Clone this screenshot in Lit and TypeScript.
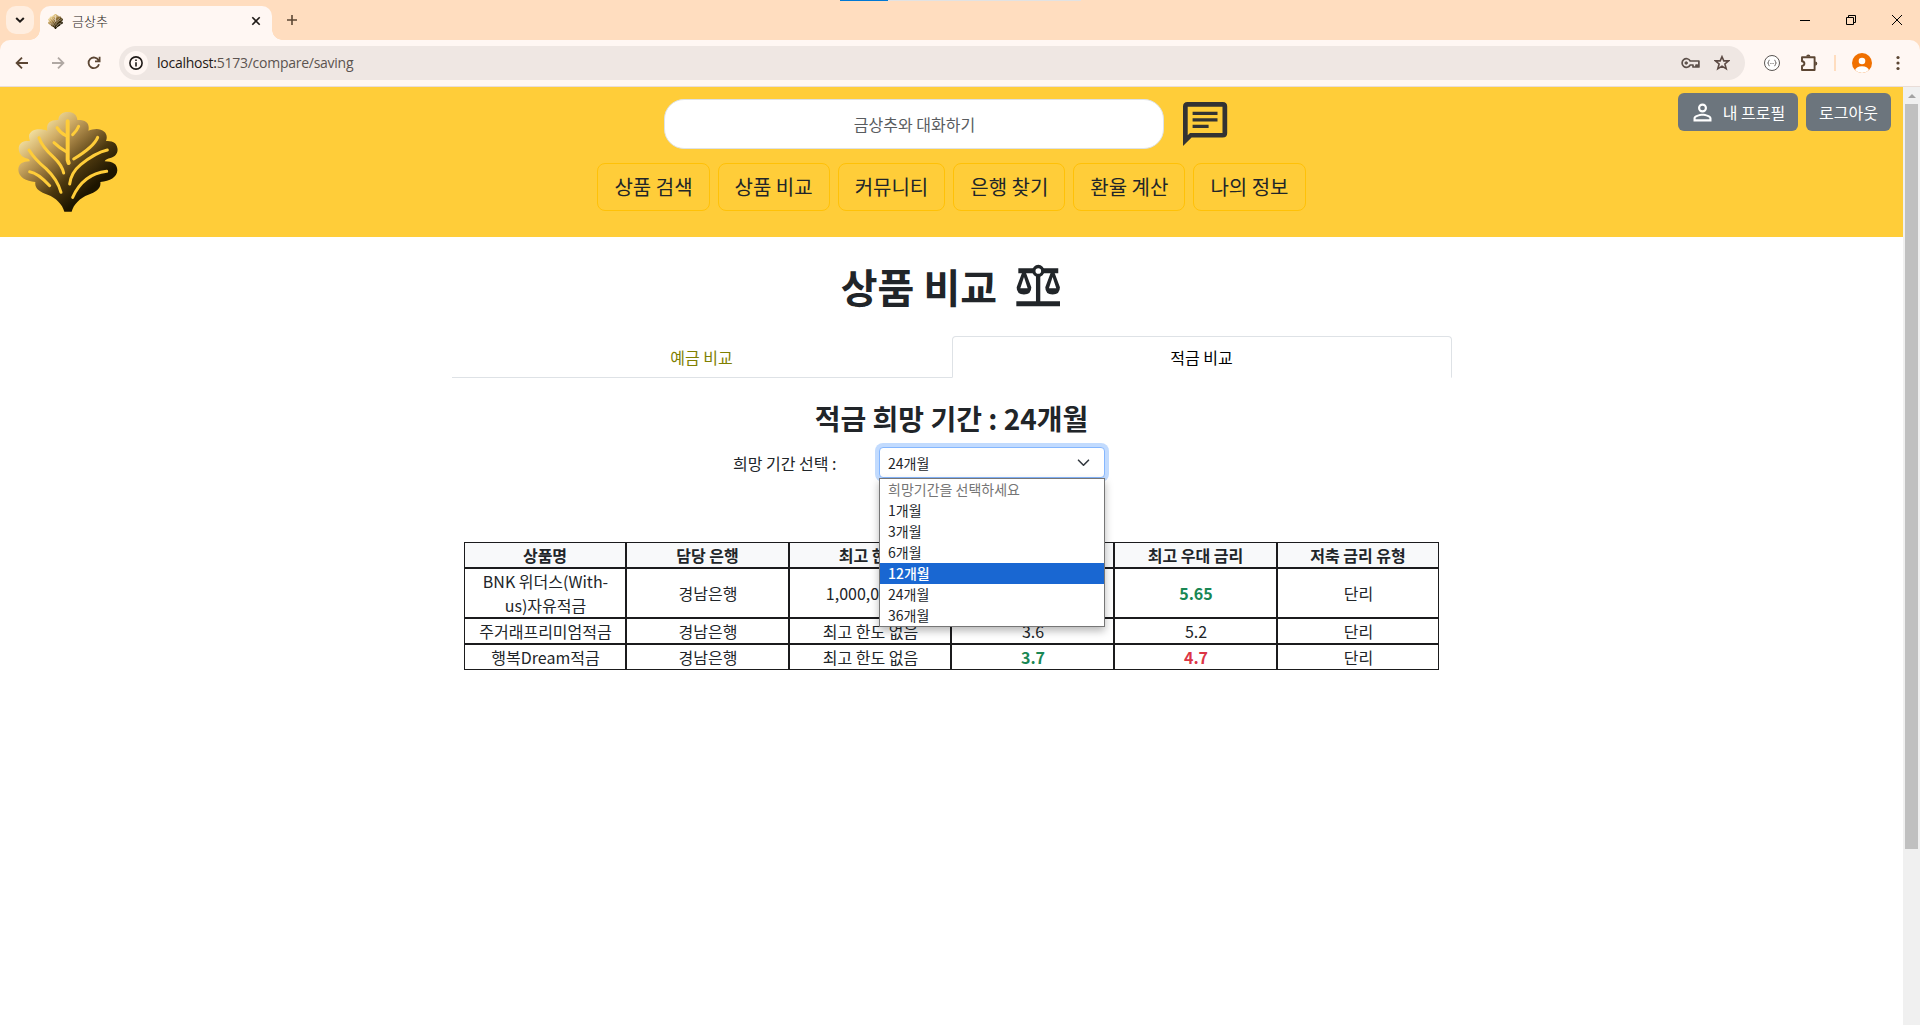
import { LitElement, html, svg, css } from "lit";
import { customElement, property, state } from "lit/decorators.js";
import { classMap } from "lit/directives/class-map.js";

/* ---------- leaf logo ---------- */
@customElement("leaf-logo")
class LeafLogo extends LitElement {
  static styles = css`
    :host { display: block; }
    svg { display: block; width: 100%; height: 100%; }
    .vein { fill: none; stroke: var(--vein, #ffcd39); stroke-width: 9; stroke-linecap: round; stroke-linejoin: round; }
    .vein.main { stroke-width: 12; }
  `;
  render() {
    return html`<svg viewBox="54 36 300 300">
      <defs>
        <linearGradient id="g" gradientUnits="userSpaceOnUse" x1="115" y1="80" x2="275" y2="265">
          <stop offset="0" stop-color="#f0dc9c" />
          <stop offset=".22" stop-color="#d0ad66" />
          <stop offset=".45" stop-color="#96753a" />
          <stop offset=".72" stop-color="#4b370e" />
          <stop offset="1" stop-color="#1d1500" />
        </linearGradient>
      </defs>
      <path fill="url(#g)" d="M193 335C187 312 168 294 143 284C120 276 103 266 106 246C78 244 56 232 55 210C55 192 68 184 89 184C90 178 84 176 76 174C52 166 48 130 74 124C80 122 86 123 90 122C80 100 97 88 118 88C126 88 134 90 142 92C138 70 150 59 175 60C176 44 188 36 203 36C219 36 231 44 232 60C258 59 270 70 265 92C273 90 281 87 290 87C312 88 326 102 318 123C328 122 338 124 345 130C360 148 352 170 331 174C323 176 317 178 314 184C338 184 352 192 352 211C351 232 330 244 301 246C304 266 288 276 265 284C240 294 221 312 215 335Z" />
      <path class="vein main" d="M203 64V180L206 189" />
      <path class="vein" d="M171 83Q181 99 198 107M236 79Q231 92 218 104M162 128Q176 142 200 156M293 112Q282 140 221 177" />
      <path class="vein" d="M117 113Q126 140 162 173Q186 196 191 219M87 150Q104 178 138 206Q172 238 183 277M89 215Q114 219 149 257M322 150Q286 158 242 194Q213 218 209 252M320 214Q250 222 218 292" />
    </svg>`;
  }
}

/* ---------- browser frame ---------- */
@customElement("browser-frame")
class BrowserFrame extends LitElement {
  static styles = css`
    :host { display: block; font-family: "Noto Sans CJK KR", sans-serif; }
    .strip { height: 40px; background: #ffddbf; display: flex; align-items: flex-start; position: relative; }
    .loadbar { position: absolute; left: 840px; top: 0; width: 241px; height: 1px; background: #e2e2e2; }
    .loadbar::before { content: ""; display: block; width: 48px; height: 1px; background: #0078d4; }
    .search-tabs { width: 28px; height: 28px; margin: 6px 0 0 6px; border-radius: 10px; background: #ffeee0; display: grid; place-items: center; }
    .tab { margin: 6px 0 0 6px; width: 232px; height: 34px; box-sizing: border-box; background: #fff7f3; border-radius: 10px 10px 0 0; display: flex; align-items: center; padding: 0 10px 4px 8px; position: relative; }
    .tab::before, .tab::after { content: ""; position: absolute; bottom: 0; width: 10px; height: 10px; }
    .tab::before { left: -10px; background: radial-gradient(circle at 0 0, transparent 9.5px, #fff7f3 10px); }
    .tab::after { right: -10px; background: radial-gradient(circle at 100% 0, transparent 9.5px, #fff7f3 10px); }
    .favicon { width: 15px; height: 15px; --vein: #fff7f3; }
    .tab-title { margin-left: 9px; flex: 1; font-size: 13px; font-weight: 300; line-height: 20px; color: #1f1a17; }
    .plus { margin: 15px 0 0 15px; }
    .win { margin-left: auto; display: flex; gap: 36px; padding: 15px 18px 0 0; }
    svg { display: block; }
    .bar { height: 47px; background: #ffddbf; }
    .bar-in { height: 47px; box-sizing: border-box; background: #fff7f3; border-radius: 10px 10px 0 0; display: flex; align-items: center; padding-left: 15px; border-bottom: 1px solid #e9ddd8; }
    .nav { display: flex; gap: 22px; }
    .omni { margin-left: 18px; width: 1626px; height: 34px; box-sizing: border-box; border-radius: 17px; background: #efe7e3; display: flex; align-items: center; padding: 0 15px 0 5px; }
    .info { width: 24px; height: 24px; border-radius: 50%; background: #fff7f3; display: grid; place-items: center; }
    .url { margin-left: 9px; flex: 1; font-family: "Open Sans", sans-serif; font-size: 14px; letter-spacing: -0.26px; color: #5c5450; }
    .host { color: #1f1a17; }
    .omni-icons { display: flex; gap: 14px; align-items: center; }
    .ext { display: flex; align-items: center; margin-left: 19px; }
    .sep { width: 2px; height: 16px; background: #ffddbf; margin: 0 16px 0 16px; }
    .braces { width: 16px; height: 16px; margin-right: 20px; }
    .dots { margin-left: 23px; }
  `;
  render() {
    return html`
      <div class="strip">
        <div class="loadbar"></div>
        <div class="search-tabs"><svg width="10" height="8" viewBox="0 0 10 8" fill="none" stroke="#1f1a17" stroke-width="2"><path d="M1.2 2L5 5.7L8.8 2" /></svg></div>
        <div class="tab">
          <leaf-logo class="favicon"></leaf-logo>
          <span class="tab-title">금상추</span>
          <svg width="12" height="12" viewBox="0 0 12 12" stroke="#1f1a17" stroke-width="1.6"><path d="M2.3 2.3L9.7 9.7M9.7 2.3L2.3 9.7" /></svg>
        </div>
        <svg class="plus" width="10" height="10" viewBox="0 0 10 10" stroke="#5c4633" stroke-width="1.6"><path d="M5 0V10M0 5H10" /></svg>
        <div class="win">
          <svg width="10" height="10" viewBox="0 0 10 10" stroke="#000"><path d="M0 5.5H10" /></svg>
          <svg width="10" height="10" viewBox="0 0 10 10" fill="none" stroke="#000"><path d="M.5 2.5H7.5V9.5H.5ZM2.5 2.5V.5H9.5V7.5H7.5" /></svg>
          <svg width="10" height="10" viewBox="0 0 10 10" stroke="#000"><path d="M0 0L10 10M10 0L0 10" /></svg>
        </div>
      </div>
      <div class="bar"><div class="bar-in">
        <div class="nav">
          <svg width="14" height="14" viewBox="0 0 14 14" fill="none" stroke="#5c4633" stroke-width="1.8"><path d="M13 7H2.2M7 1.6L1.6 7L7 12.4" /></svg>
          <svg width="14" height="14" viewBox="0 0 14 14" fill="none" stroke="#b0a8a3" stroke-width="1.8"><path d="M1 7H11.8M7 1.6L12.4 7L7 12.4" /></svg>
          <svg width="14" height="14" viewBox="0 0 14 14" fill="none" stroke="#5c4633" stroke-width="1.8"><path d="M12 8.2A5.3 5.3 0 1 1 11.6 4.4M12.6 .8V5.4H8" /></svg>
        </div>
        <div class="omni">
          <div class="info"><svg width="14" height="14" viewBox="0 0 14 14" fill="none" stroke="#1f1a17" stroke-width="1.6"><circle cx="7" cy="7" r="6.1" /><path d="M7 6.2V10.4M7 3.4V5" /></svg></div>
          <span class="url"><span class="host">localhost:</span>5173/compare/saving</span>
          <div class="omni-icons">
            <svg width="19" height="12" viewBox="0 0 19 12" fill="none" stroke="#5c504a" stroke-width="1.7"><path d="M9.2 4A4.3 4.3 0 1 0 9.2 8H12V10H15V8.2H16.4V10H17.9V4Z" stroke-linejoin="round" /><circle cx="5.2" cy="6" r="1.3" fill="#5c504a" stroke-width=".8" /></svg>
            <svg width="16" height="16" viewBox="0 0 16 16" fill="none" stroke="#5c4a44" stroke-width="1.6"><path d="M8 1.7L9.8 5.9H14.6L10.9 9L12.2 13.8L8 11.1L3.8 13.8L5.1 9L1.4 5.9H6.2Z" /></svg>
          </div>
        </div>
        <div class="ext">
          <svg class="braces" viewBox="0 0 16 16" fill="none" stroke="#5a5552"><circle cx="8" cy="8" r="7.5" fill="#fff" /><path d="M5.6 5.2Q4.6 5.2 4.6 6.4Q4.6 8 3.6 8Q4.6 8 4.6 9.6Q4.6 10.8 5.6 10.8M10.4 5.2Q11.4 5.2 11.4 6.4Q11.4 8 12.4 8Q11.4 8 11.4 9.6Q11.4 10.8 10.4 10.8M6.4 8.5H7.2M7.7 8.5H8.4M8.9 8.5H9.6" stroke-width=".9" /></svg>
          <svg width="18" height="18" viewBox="0 0 18 18" fill="none" stroke="#5c4633" stroke-width="1.9" stroke-linejoin="round"><path d="M2 3.2H14.6V16H2V12Q4.4 11.7 4.4 9.6Q4.4 7.5 2 7.2Z" /><path fill="#5c4633" stroke="none" d="M6.2 2.6A2.1 2.1 0 0 1 10.4 2.6ZM15.2 7.5A2.1 2.1 0 0 1 15.2 11.7Z" /></svg>
          <span class="sep"></span>
          <svg width="20" height="20" viewBox="0 0 20 20"><defs><clipPath id="c"><circle cx="10" cy="10" r="10" /></clipPath></defs><circle cx="10" cy="10" r="10" fill="#f07000" /><g fill="#fff" clip-path="url(#c)"><circle cx="10" cy="8" r="3.3" /><ellipse cx="10" cy="18" rx="7" ry="4.8" /></g></svg>
          <svg class="dots" width="6" height="16" viewBox="0 0 6 16" fill="#5c4633"><circle cx="3" cy="2.5" r="1.6" /><circle cx="3" cy="8" r="1.6" /><circle cx="3" cy="13.5" r="1.6" /></svg>
        </div>
      </div></div>`;
  }
}

/* ---------- site header ---------- */
@customElement("site-header")
class SiteHeader extends LitElement {
  @property({ type: Array }) menu: string[] = [];
  static styles = css`
    :host { display: grid; grid-template-columns: 1fr auto 1fr; height: 150px; box-sizing: border-box; background: #ffcd39; align-items: start; }
    .logo { width: 100px; height: 100px; margin: 25px 0 0 18px; --vein: #ffcd39; }
    .center { display: flex; flex-direction: column; gap: 14px; padding-top: 12px; }
    .ask { display: flex; align-items: center; height: 50px; padding-left: 67px; gap: 19px; }
    .input { width: 500px; height: 50px; box-sizing: border-box; border: 1px solid #dee2e6; border-radius: 20px; background: #fff; display: flex; align-items: center; justify-content: center; color: #595c5f; }
    .menu { display: flex; gap: 8px; }
    .btn-lg { font-size: 20px; line-height: 30px; padding: 8px 16px; border: 1px solid #ffc107; border-radius: 8px; white-space: nowrap; }
    .user { display: flex; justify-content: flex-end; gap: 8px; padding: 6px 12px 0 0; }
    .btn { display: flex; align-items: center; box-sizing: border-box; height: 38px; padding: 0 13px; border-radius: 6px; background: #6c757d; color: #fff; white-space: nowrap; }
    .btn svg { margin: 0 7px 0 -2px; }
    svg { display: block; flex: none; }
  `;
  render() {
    return html`
      <leaf-logo class="logo"></leaf-logo>
      <div class="center">
        <div class="ask">
          <div class="input">금상추와 대화하기</div>
          <svg width="45" height="44" viewBox="0 0 45 44"><path fill="#333" fill-rule="evenodd" d="M0 44V4.5Q0 0 4.5 0H39.7Q44.2 0 44.2 4.5V31Q44.2 35.5 39.7 35.5H8.6ZM4.7 33.2L7 30.9H39.5V4.8H4.7Z" /><path stroke="#333" stroke-width="3.2" d="M9.6 11.3H34.5M9.6 17.8H34.5M9.6 24.4H25.6" /></svg>
        </div>
        <div class="menu">${this.menu.map((m) => html`<div class="btn-lg">${m}</div>`)}</div>
      </div>
      <div class="user">
        <div class="btn"><svg width="27" height="27" viewBox="0 0 24 24" fill="#fff"><path d="M12 5.9a2.1 2.1 0 1 1 0 4.2 2.1 2.1 0 0 1 0-4.2m0 9c2.97 0 6.1 1.46 6.1 2.1v1.1H5.9V17c0-.64 3.13-2.1 6.1-2.1M12 4C9.79 4 8 5.79 8 8s1.79 4 4 4 4-1.79 4-4-1.79-4-4-4zm0 9c-2.67 0-8 1.34-8 4v3h16v-3c0-2.66-5.33-4-8-4z" /></svg>내 프로필</div>
        <div class="btn">로그아웃</div>
      </div>`;
  }
}

/* ---------- period select with its open list ---------- */
@customElement("period-select")
class PeriodSelect extends LitElement {
  @property() value = "";
  @property() active = "";
  @property({ type: Array }) options: string[] = [];
  static styles = css`
    :host { display: block; position: relative; width: 226px; font-size: 14px; }
    .control { box-sizing: border-box; height: 31px; display: flex; align-items: center; justify-content: space-between; padding: 0 14px 0 8px; border: 1px solid #86b7fe; border-radius: 4px; background: #fff; box-shadow: 0 0 0 4px #c2dbfe; }
    .list { position: absolute; z-index: 2; left: 0; top: 31px; width: 226px; box-sizing: border-box; border: 1px solid #767676; background: #fff; box-shadow: 0 4px 8px rgba(0, 0, 0, 0.28); }
    .opt { height: 21px; line-height: 21px; padding-left: 8px; }
    .hint { color: #757575; }
    .on { background: #1967d2; color: #fff; font-weight: 500; }
  `;
  render() {
    return html`
      <div class="control"><span>${this.value}</span>
        <svg width="13" height="8" viewBox="0 0 13 8" fill="none" stroke="#343a40" stroke-width="1.6" stroke-linecap="round" stroke-linejoin="round"><path d="M1.5 1.2L6.5 6.2L11.5 1.2" /></svg>
      </div>
      <div class="list">
        ${this.options.map((o, i) => html`<div class=${classMap({ opt: true, hint: i === 0, on: o === this.active })}>${o}</div>`)}
      </div>`;
  }
}

type Cell = string | { v: string; tone: "up" | "down" };

/* ---------- page ---------- */
@customElement("app-root")
class AppRoot extends LitElement {
  @state() private menu = ["상품 검색", "상품 비교", "커뮤니티", "은행 찾기", "환율 계산", "나의 정보"];
  @state() private periods = ["희망기간을 선택하세요", "1개월", "3개월", "6개월", "12개월", "24개월", "36개월"];
  @state() private period = "24개월";
  private heads = ["상품명", "담당 은행", "최고 한도", "저축 금리", "최고 우대 금리", "저축 금리 유형"];
  private rows: Cell[][] = [
    ["BNK 위더스(With-us)자유적금", "경남은행", "1,000,000 원", "3.65", { v: "5.65", tone: "up" }, "단리"],
    ["주거래프리미엄적금", "경남은행", "최고 한도 없음", "3.6", "5.2", "단리"],
    ["행복Dream적금", "경남은행", "최고 한도 없음", { v: "3.7", tone: "up" }, { v: "4.7", tone: "down" }, "단리"],
  ];

  static styles = css`
    :host { display: flex; flex-direction: column; width: 1920px; height: 1025px; overflow: hidden; background: #fff; font-family: "Noto Sans CJK KR", sans-serif; font-size: 16px; line-height: 24px; color: #212529; }
    .view { flex: 1; display: flex; min-height: 0; }
    .page { width: 1903px; }
    .scroll { width: 17px; box-sizing: border-box; padding: 7px 2px 0; background: #f0f0f0; display: flex; flex-direction: column; align-items: center; }
    .arrow { width: 0; height: 0; border: 4px solid transparent; border-top: 0; border-bottom-color: #a3a3a3; }
    .thumb { width: 13px; height: 745px; margin-top: 6px; background: #c0c0c0; }
    .main { display: flex; flex-direction: column; align-items: center; }
    .title { margin: 0; height: 48px; padding: 25px 2px 0 0; display: flex; align-items: center; gap: 18.5px; font-size: 40px; line-height: 48px; font-weight: 700; }
    .title svg { display: block; margin-top: -1px; }
    .tabs { display: grid; grid-template-columns: 1fr 1fr; width: 1000px; margin-top: 26px; }
    .tab { box-sizing: border-box; height: 42px; line-height: 24px; padding: 9px 0; text-align: center; border-bottom: 1px solid #dee2e6; color: #808000; }
    .tab.active { border: 1px solid #dee2e6; border-bottom-color: transparent; border-radius: 4px 4px 0 0; padding-top: 8px; color: #000; }
    .sub { margin: 23px 0 0; font-size: 28px; line-height: 34px; font-weight: 600; }
    .row { display: flex; align-items: center; margin: 12px 65px 0 0; width: 372px; justify-content: space-between; }
    .table { display: grid; grid-template-columns: 162px 163px 162px 163px 163px 162px; width: 975px; margin: 64px 0 0 0; }
    .cell { box-sizing: border-box; border: 1px solid #1b1b1d; display: flex; align-items: center; justify-content: center; text-align: center; padding: 0 7px 0 8px; min-height: 26px; }
    .head { background: #f8f9fa; font-weight: 600; padding: 0; }
    .up { color: #198754; font-weight: 700; }
    .down { color: #dc3545; font-weight: 700; }
  `;

  private cell(c: Cell) {
    return typeof c === "string"
      ? html`<div class="cell">${c}</div>`
      : html`<div class="cell ${c.tone}">${c.v}</div>`;
  }

  render() {
    const pan = (x: number) => svg`<path fill="#212529" fill-rule="evenodd" d="M${x - 5} 98H${x + 5}L${x + 22} 144Q${x + 22} 166 ${x} 166Q${x - 22} 166 ${x - 22} 144ZM${x} 113L${x - 11} 147H${x + 11}Z" />`;
    return html`
      <browser-frame></browser-frame>
      <div class="view">
        <div class="page">
          <site-header .menu=${this.menu}></site-header>
          <div class="main">
            <h1 class="title">상품 비교
              <svg width="44.6" height="42.6" viewBox="647 74 134 128">
                <path fill="#212529" d="M654 87H774V102H654ZM707 100H720V188H707ZM648 186H780V201H648Z" />
                ${pan(671)}${pan(757)}
                <circle cx="714" cy="95" r="13.5" fill="#fff" stroke="#212529" stroke-width="10" />
              </svg>
            </h1>
            <div class="tabs">
              <div class="tab">예금 비교</div>
              <div class="tab active">적금 비교</div>
            </div>
            <h3 class="sub">적금 희망 기간 : ${this.period}</h3>
            <div class="row">
              <span>희망 기간 선택 :</span>
              <period-select .value=${this.period} .active=${"12개월"} .options=${this.periods}></period-select>
            </div>
            <div class="table">
              ${this.heads.map((h) => html`<div class="cell head">${h}</div>`)}
              ${this.rows.map((r) => r.map((c) => this.cell(c)))}
            </div>
          </div>
        </div>
        <div class="scroll"><div class="arrow"></div><div class="thumb"></div></div>
      </div>`;
  }
}
